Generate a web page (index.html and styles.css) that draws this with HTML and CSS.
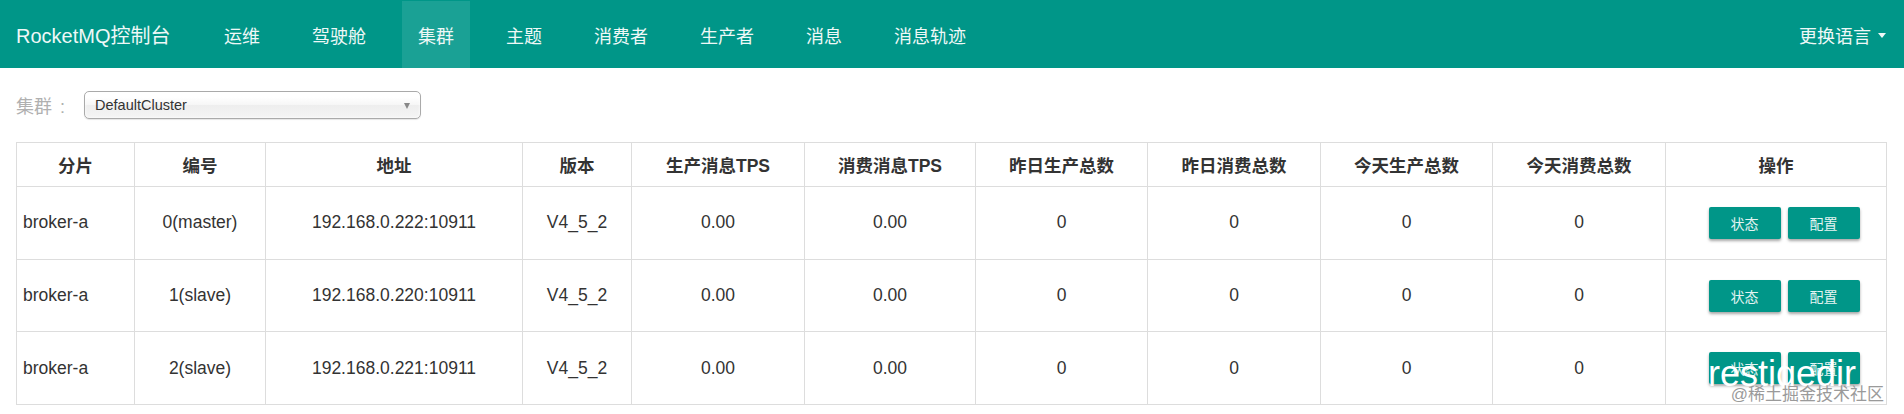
FILE: index.html
```html
<!DOCTYPE html>
<html lang="zh-CN">
<head>
<meta charset="utf-8">
<title>RocketMQ控制台</title>
<link rel="stylesheet" href="styles.css">
</head>
<body>
<nav class="navbar">
  <a class="brand">RocketMQ控制台</a>
  <ul class="nav">
    <li><a>运维</a></li>
    <li><a>驾驶舱</a></li>
    <li class="active"><a>集群</a></li>
    <li><a>主题</a></li>
    <li><a>消费者</a></li>
    <li><a>生产者</a></li>
    <li><a>消息</a></li>
    <li><a>消息轨迹</a></li>
  </ul>
  <div class="lang">更换语言<span class="caret"></span></div>
</nav>
<main class="content">
  <div class="filter">
    <label class="filter-label">集群<span class="colon">:</span></label>
    <div class="select"><span>DefaultCluster</span><b class="arrow"></b></div>
  </div>
  <table class="grid">
    <colgroup>
      <col class="w1"><col class="w2"><col class="w3"><col class="w4"><col class="w5"><col class="w6"><col class="w7"><col class="w8"><col class="w9"><col class="w10"><col class="w11">
    </colgroup>
    <thead>
      <tr><th>分片</th><th>编号</th><th>地址</th><th>版本</th><th>生产消息TPS</th><th>消费消息TPS</th><th>昨日生产总数</th><th>昨日消费总数</th><th>今天生产总数</th><th>今天消费总数</th><th>操作</th></tr>
    </thead>
    <tbody>
      <tr><td class="left">broker-a</td><td>0(master)</td><td>192.168.0.222:10911</td><td>V4_5_2</td><td>0.00</td><td>0.00</td><td>0</td><td>0</td><td>0</td><td>0</td><td class="ops"><span class="btn">状态</span><span class="btn">配置</span></td></tr>
      <tr><td class="left">broker-a</td><td>1(slave)</td><td>192.168.0.220:10911</td><td>V4_5_2</td><td>0.00</td><td>0.00</td><td>0</td><td>0</td><td>0</td><td>0</td><td class="ops"><span class="btn">状态</span><span class="btn">配置</span></td></tr>
      <tr><td class="left">broker-a</td><td>2(slave)</td><td>192.168.0.221:10911</td><td>V4_5_2</td><td>0.00</td><td>0.00</td><td>0</td><td>0</td><td>0</td><td>0</td><td class="ops"><span class="btn">状态</span><span class="btn">配置</span></td></tr>
    </tbody>
  </table>
</main>
<div class="wm-white">prestigedir</div>
<div class="wm-grey">@稀土掘金技术社区</div>
</body>
</html>
```
FILE: styles.css
```css
* { box-sizing: border-box; }
html, body { margin: 0; padding: 0; background: #fff; }
body {
  font-family: "Liberation Sans", "Noto Sans CJK SC", sans-serif;
  color: #333;
  width: 1904px;
  height: 414px;
  overflow: hidden;
  position: relative;
}

.navbar {
  display: flex;
  align-items: stretch;
  height: 68px;
  background: #009688;
  border-top: 1px solid #009688;
  padding-left: 16px;
}
.brand {
  width: 182px;
  display: flex;
  align-items: center;
  font-size: 20px;
  color: #eef8f7;
}
.nav {
  display: flex;
  list-style: none;
  margin: 0;
  padding: 0;
}
.nav li {
  margin: 0 10px;
  display: flex;
}
.nav a {
  display: flex;
  align-items: center;
  padding: 0 16px;
  font-size: 18px;
  color: #eef8f7;
}
.nav li.active a { background: #1aa195; }
.lang {
  margin-left: auto;
  display: flex;
  align-items: center;
  padding-right: 18px;
  font-size: 18px;
  color: #eef8f7;
}
.caret {
  display: inline-block;
  width: 0; height: 0;
  margin-left: 7px;
  margin-top: 2px;
  border-top: 5px solid #eef8f7;
  border-left: 4.5px solid transparent;
  border-right: 4.5px solid transparent;
}

.content { padding: 23px 18px 0 16px; }
.filter {
  display: flex;
  align-items: center;
  height: 28px;
}
.filter-label {
  width: 68px;
  font-size: 18px;
  color: #b0b0b0;
}
.colon { margin-left: 8px; }
.select {
  position: relative;
  width: 337px;
  height: 28px;
  border: 1px solid #aaa;
  border-radius: 5px;
  background: linear-gradient(#fff 20%, #f6f6f6 50%, #eee 52%, #f4f4f4 100%);
  box-shadow: 0 0 3px #fff inset, 0 1px 1px rgba(0,0,0,.1);
  display: flex;
  align-items: center;
  padding-left: 10px;
  font-size: 14.5px;
  color: #333;
}
.arrow {
  position: absolute;
  right: 10px;
  top: 11px;
  width: 0; height: 0;
  border-top: 6px solid #888;
  border-left: 3.5px solid transparent;
  border-right: 3.5px solid transparent;
}

.grid {
  margin-top: 23px;
  width: 1870px;
  border-collapse: collapse;
  table-layout: fixed;
}
.w1 { width: 118px; } .w2 { width: 131px; } .w3 { width: 257px; } .w4 { width: 109px; }
.w5 { width: 173px; } .w6 { width: 171px; } .w7 { width: 172px; } .w8 { width: 173px; }
.w9 { width: 172px; } .w10 { width: 173px; } .w11 { width: 221px; }
.grid th, .grid td {
  border: 1px solid #ddd;
  text-align: center;
  padding: 0 6px;
}
.grid th {
  height: 44px;
  font-size: 17.5px;
  font-weight: bold;
  color: #333;
}
.grid td {
  height: 72.7px;
  font-size: 17.5px;
  color: #333;
}
.grid td.left { text-align: left; }
.grid td.ops { padding-left: 22px; }
.btn {
  display: inline-flex;
  align-items: center;
  justify-content: center;
  width: 72px;
  height: 32px;
  margin: 0 3.5px;
  background: #009688;
  color: #e4f4f2;
  font-size: 14px;
  border-radius: 2px;
  box-shadow: 0 2px 3px rgba(0,0,0,.35);
  vertical-align: middle;
}

.wm-white {
  position: absolute;
  right: 48px;
  top: 355px;
  font-size: 36px;
  line-height: 38px;
  color: #fff;
  pointer-events: none;
}
.wm-grey {
  position: absolute;
  right: 20px;
  top: 384px;
  font-size: 17px;
  line-height: 22px;
  color: #9a9a9a;
  pointer-events: none;
}
```
